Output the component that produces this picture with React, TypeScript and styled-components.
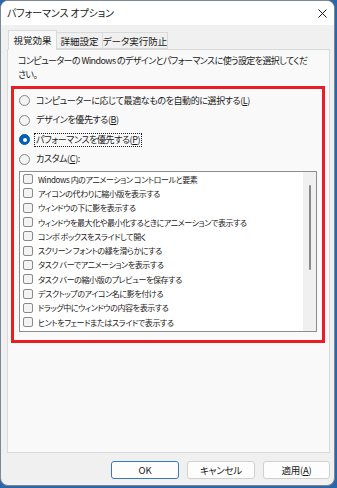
import React from 'react';
import styled, { createGlobalStyle } from 'styled-components';

const Global = createGlobalStyle`
  html, body { margin: 0; padding: 0; background: #2b66a8; }
  body {
    font-family: "Noto Sans CJK JP", "Noto Sans", sans-serif;
    font-size: 9px;
    letter-spacing: -0.4px;
    color: #1a1a1a;
    font-feature-settings: "palt";
  }
  * { box-sizing: border-box; }
`;

const Window = styled.div`
  width: 335px;
  height: 486px;
  background: #f0f0f0;
  border: 1px solid #7d8895;
  border-radius: 8px;
  overflow: hidden;
  display: flex;
  flex-direction: column;
`;

const TitleBar = styled.div`
  height: 24px;
  flex: none;
  background: #ffffff;
  display: flex;
  align-items: center;
  padding-left: 6px;
`;

const Title = styled.span`
  font-size: 10px;
  letter-spacing: -0.1px;
  line-height: 14px;
`;

const CloseButton = styled.div`
  margin-left: auto;
  width: 24px;
  height: 24px;
  display: flex;
  align-items: center;
  justify-content: center;
`;

const Body = styled.div`
  flex: 1;
  display: flex;
  flex-direction: column;
  padding: 5px 4px 6px 6px;
`;

const TabStrip = styled.div`
  height: 19px;
  flex: none;
  display: flex;
  align-items: flex-end;
  padding-left: 1px;
  position: relative;
  z-index: 1;
`;

const Tab = styled.div<{ $active?: boolean; $w: number }>`
  width: ${p => p.$w}px;
  height: ${p => (p.$active ? 20 : 17)}px;
  margin-bottom: ${p => (p.$active ? -1 : 0)}px;
  background: ${p => (p.$active ? '#f9f9f9' : '#f0f0f0')};
  border: 1px solid #d9d9d9;
  border-bottom: ${p => (p.$active ? 'none' : '1px solid #d9d9d9')};
  margin-left: ${p => (p.$active ? 0 : -1)}px;
  display: flex;
  align-items: center;
  justify-content: center;
  white-space: nowrap;
  font-size: 9.5px;
  letter-spacing: 0;
  line-height: 14px;
  padding-bottom: ${p => (p.$active ? 1 : 0)}px;
`;

const Panel = styled.div`
  height: 404px;
  flex: none;
  background: #f9f9f9;
  border: 1px solid #d9d9d9;
  padding: 4px 4px 0 3px;
  display: flex;
  flex-direction: column;
`;

const Description = styled.div`
  padding-left: 7px;
  line-height: 14px;
  letter-spacing: -0.6px;
  white-space: nowrap;
`;

const Highlight = styled.div`
  margin-top: 4px;
  border: 3px solid #ec1c24;
  padding: 2px 5px 8px 5px;
  display: flex;
  flex-direction: column;
`;

const RadioRow = styled.div`
  height: 19.5px;
  display: flex;
  align-items: center;
  gap: 4px;
  white-space: nowrap;
`;

const RadioCircle = styled.span<{ $checked?: boolean }>`
  width: 11px;
  height: 11px;
  border-radius: 50%;
  flex: none;
  position: relative;
  background: ${p => (p.$checked ? '#005fb8' : '#f4f4f4')};
  border: 1px solid ${p => (p.$checked ? '#005fb8' : '#858585')};
  &::after {
    content: '';
    display: ${p => (p.$checked ? 'block' : 'none')};
    position: absolute;
    left: 2.5px;
    top: 2.5px;
    width: 4px;
    height: 4px;
    border-radius: 50%;
    background: #ffffff;
  }
`;

const Label = styled.span<{ $focus?: boolean }>`
  line-height: 12px;
  padding: 0 1px;
  border: 1px dotted ${p => (p.$focus ? '#1a1a1a' : 'transparent')};
`;

const Key = styled.span`
  text-decoration: underline;
`;

const ListBox = styled.div`
  margin-top: 2px;
  height: 161px;
  background: #ffffff;
  border: 1px solid #8d8d8d;
  display: flex;
  overflow: hidden;
`;

const ListItems = styled.div`
  flex: 1;
  padding-left: 3px;
  overflow: hidden;
`;

const CheckRow = styled.div`
  height: 14.3px;
  display: flex;
  align-items: center;
  gap: 5px;
  white-space: nowrap;
  font-size: 8px;
  letter-spacing: -0.4px;
`;

const CheckBox = styled.span`
  width: 10px;
  height: 10px;
  flex: none;
  border: 1px solid #8a8a8a;
  border-radius: 2px;
  background: #f3f3f3;
`;

const ScrollTrack = styled.div`
  width: 13px;
  flex: none;
  background: #f0f0f0;
  display: flex;
  justify-content: center;
  padding-top: 13px;
`;

const ScrollThumb = styled.div`
  width: 2px;
  height: 85px;
  background: #8a8a8a;
  border-radius: 1px;
`;

const Footer = styled.div`
  margin-top: 8px;
  display: flex;
  justify-content: flex-end;
  gap: 8px;
`;

const Button = styled.button<{ $primary?: boolean; $w: number }>`
  width: ${p => p.$w}px;
  height: 18px;
  padding: 0;
  font: inherit;
  font-size: 9.5px;
  letter-spacing: -0.2px;
  color: #1a1a1a;
  background: #fdfdfd;
  border: 1px solid ${p => (p.$primary ? '#3a78c0' : '#d0d0d0')};
  border-radius: 3px;
  display: flex;
  align-items: center;
  justify-content: center;
  line-height: 12px;
`;

const radios: { label: React.ReactNode; checked?: boolean; focus?: boolean }[] = [
  { label: <>コンピューターに応じて最適なものを自動的に選択する(<Key>L</Key>)</> },
  { label: <>デザインを優先する(<Key>B</Key>)</> },
  { label: <>パフォーマンスを優先する(<Key>P</Key>)</>, checked: true, focus: true },
  { label: <>カスタム(<Key>C</Key>):</> },
];

const items = [
  'Windows 内のアニメーション コントロールと要素',
  'アイコンの代わりに縮小版を表示する',
  'ウィンドウの下に影を表示する',
  'ウィンドウを最大化や最小化するときにアニメーションで表示する',
  'コンボ ボックスをスライドして開く',
  'スクリーン フォントの縁を滑らかにする',
  'タスク バーでアニメーションを表示する',
  'タスク バーの縮小版のプレビューを保存する',
  'デスクトップのアイコン名に影を付ける',
  'ドラッグ中にウィンドウの内容を表示する',
  'ヒントをフェードまたはスライドで表示する',
  'マウス ポインターの下に影を表示する',
];

export default function App() {
  return (
    <>
      <Global />
      <Window>
        <TitleBar>
          <Title>パフォーマンス オプション</Title>
          <CloseButton>
            <svg width="9" height="9" viewBox="0 0 9 9">
              <path d="M0.5 0.5 L8.5 8.5 M8.5 0.5 L0.5 8.5" stroke="#1a1a1a" strokeWidth="1" fill="none" />
            </svg>
          </CloseButton>
        </TitleBar>
        <Body>
          <TabStrip>
            <Tab $active $w={49}>視覚効果</Tab>
            <Tab $w={47}>詳細設定</Tab>
            <Tab $w={66}>データ実行防止</Tab>
          </TabStrip>
          <Panel>
            <Description>
              コンピューターの Windows のデザインとパフォーマンスに使う設定を選択してくだ
              <br />
              さい。
            </Description>
            <Highlight>
              {radios.map((r, i) => (
                <RadioRow key={i}>
                  <RadioCircle $checked={r.checked} />
                  <Label $focus={r.focus}>{r.label}</Label>
                </RadioRow>
              ))}
              <ListBox>
                <ListItems>
                  {items.map(t => (
                    <CheckRow key={t}>
                      <CheckBox />
                      <span>{t}</span>
                    </CheckRow>
                  ))}
                </ListItems>
                <ScrollTrack>
                  <ScrollThumb />
                </ScrollTrack>
              </ListBox>
            </Highlight>
          </Panel>
          <Footer>
            <Button $primary $w={68}>OK</Button>
            <Button $w={68}>キャンセル</Button>
            <Button $w={67}>適用(<Key>A</Key>)</Button>
          </Footer>
        </Body>
      </Window>
    </>
  );
}
